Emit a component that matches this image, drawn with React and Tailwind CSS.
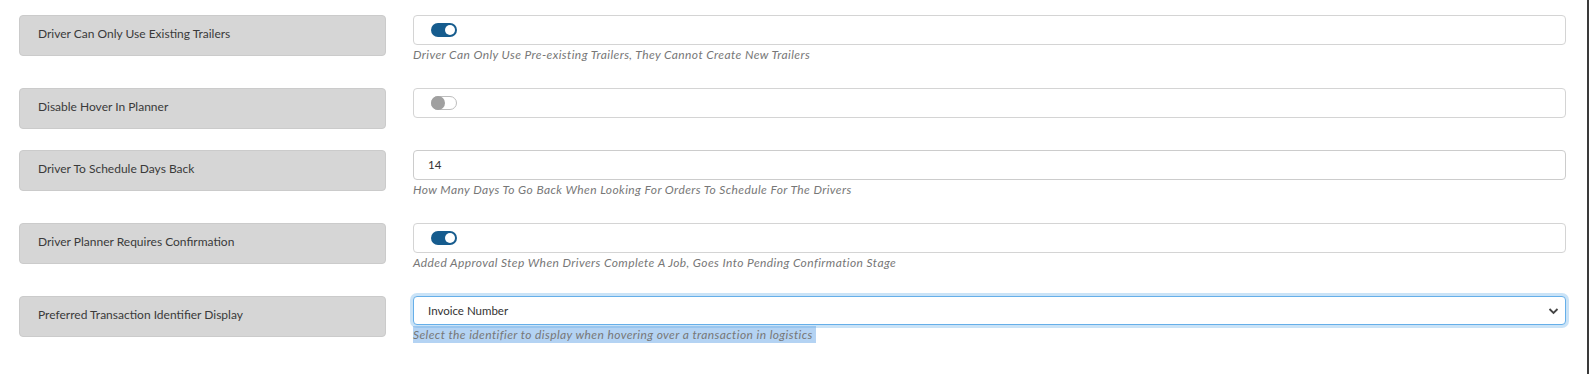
import React from 'react';

const settings = [
    {
        label: 'Driver Can Only Use Existing Trailers',
        type: 'toggle',
        on: true,
        help: 'Driver Can Only Use Pre-existing Trailers, They Cannot Create New Trailers',
    },
    { label: 'Disable Hover In Planner', type: 'toggle', on: false },
    {
        label: 'Driver To Schedule Days Back',
        type: 'text',
        value: '14',
        help: 'How Many Days To Go Back When Looking For Orders To Schedule For The Drivers',
    },
    {
        label: 'Driver Planner Requires Confirmation',
        type: 'toggle',
        on: true,
        help: 'Added Approval Step When Drivers Complete A Job, Goes Into Pending Confirmation Stage',
    },
    {
        label: 'Preferred Transaction Identifier Display',
        type: 'select',
        value: 'Invoice Number',
        help: 'Select the identifier to display when hovering over a transaction in logistics',
        selected: true,
    },
];

const Toggle = ({ on }) =>
    on ? (
        <span className="relative inline-block w-[26px] h-[14px] rounded-full bg-[#165c8e]">
            <span className="absolute right-[2px] top-[2px] w-[10px] h-[10px] rounded-full bg-white" />
        </span>
    ) : (
        <span className="relative inline-block w-[26px] h-[14px] rounded-full bg-white border border-[#bdbdbd]">
            <span className="absolute left-[-1px] top-[-1px] w-[14px] h-[14px] rounded-full bg-[#a0a0a0]" />
        </span>
    );

const Control = ({ item }) => {
    if (item.type === 'select') {
        return (
            <div className="relative h-[29px] rounded border border-[#66afe9] bg-white shadow-[0_0_0_3px_rgba(102,175,233,0.35)]">
                <select
                    defaultValue={item.value}
                    className="appearance-none w-full h-full bg-transparent pl-[14px] pr-8 pb-[2px] text-[11.5px] text-[#333] outline-none"
                >
                    <option>Invoice Number</option>
                    <option>Transaction Number</option>
                </select>
                <svg
                    className="absolute right-[6px] top-[10px] pointer-events-none"
                    width="11"
                    height="8"
                    viewBox="0 0 11 8"
                    fill="none"
                >
                    <path d="M1.5 2 L5.5 6 L9.5 2" stroke="#444" strokeWidth="1.8" />
                </svg>
            </div>
        );
    }
    if (item.type === 'text') {
        return (
            <div className="h-[30px] rounded border border-[#ccc] bg-white flex items-center pl-[14px] text-[11.5px] text-[#333]">
                {item.value}
            </div>
        );
    }
    return (
        <div className="h-[30px] rounded border border-[#d4d4d4] bg-white flex items-center pl-[17px]">
            <Toggle on={item.on} />
        </div>
    );
};

const App = () => {
    return (
        <div
            className="w-[1589px] h-[374px] bg-white border-r-2 border-[#3a3a3a] pt-[15px] pl-[19px] pr-[21px] overflow-hidden"
            style={{ fontFamily: 'Lato, "Open Sans", sans-serif' }}
        >
            {settings.map((item) => (
                <div key={item.label} className="flex items-start gap-[27px] mb-[21px]">
                    <div className="w-[367px] h-[41px] shrink-0 rounded bg-[#d6d6d6] border border-[#cbcbcb] flex items-center pl-[18px] pb-[3px] text-[12px] text-[#3a3a3a]">
                        {item.label}
                    </div>
                    <div className="flex-1">
                        <Control item={item} />
                        {item.help && (
                            <div className="mt-[1px] h-[21px] text-[12px] leading-[18px] italic tracking-[0.4px] text-[#777]">
                                {item.selected ? (
                                    <span className="bg-[#b4d3f3] pr-[3px] py-[1px]">{item.help}</span>
                                ) : (
                                    item.help
                                )}
                            </div>
                        )}
                    </div>
                </div>
            ))}
        </div>
    );
};

export default App;
